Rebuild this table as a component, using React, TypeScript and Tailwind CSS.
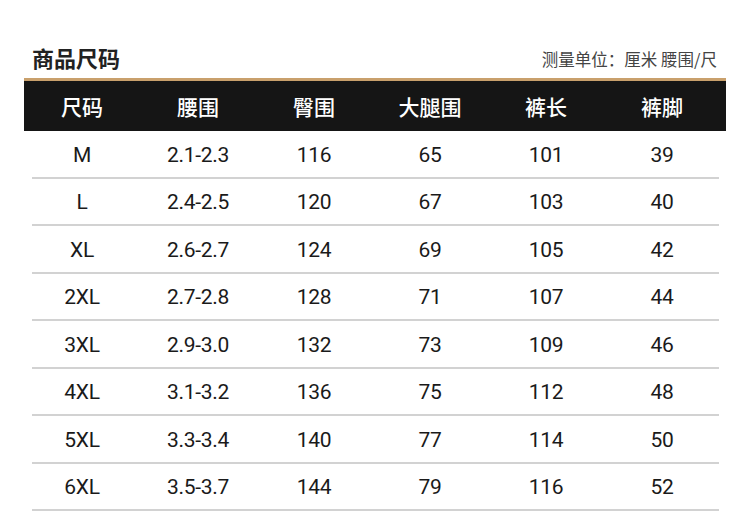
const headers = ['尺码', '腰围', '臀围', '大腿围', '裤长', '裤脚']

const rows = [
  ['M', '2.1-2.3', '116', '65', '101', '39'],
  ['L', '2.4-2.5', '120', '67', '103', '40'],
  ['XL', '2.6-2.7', '124', '69', '105', '42'],
  ['2XL', '2.7-2.8', '128', '71', '107', '44'],
  ['3XL', '2.9-3.0', '132', '73', '109', '46'],
  ['4XL', '3.1-3.2', '136', '75', '112', '48'],
  ['5XL', '3.3-3.4', '140', '77', '114', '50'],
  ['6XL', '3.5-3.7', '144', '79', '116', '52'],
]

const cjk = { fontFamily: '"Noto Sans CJK SC", "Noto Sans", sans-serif' }
const num = { fontFamily: 'Roboto, "Noto Sans", sans-serif' }

export default function App() {
  return (
    <div className="w-[750px] h-[531px] bg-white overflow-hidden">
      {/* title */}
      <div className="h-[78px] pt-[36px] pl-[32px] pr-[33px] flex items-center justify-between">
        <h1 className="text-[22px] leading-none font-bold text-[#222]" style={cjk}>
          商品尺码
        </h1>
        <span className="mt-[5px] text-[16.5px] leading-none text-[#444]" style={cjk}>
          测量单位：厘米 腰围/尺
        </span>
      </div>

      <div className="ml-[24px] mr-[24px]">
        {/* header bar */}
        <div className="h-[53px] border-t-[3px] border-[#c9a06c] bg-[#151515] grid grid-cols-[repeat(6,116px)] items-center">
          {headers.map((h) => (
            <div key={h} className="text-center text-white text-[21px] font-medium leading-none" style={cjk}>
              {h}
            </div>
          ))}
        </div>

        {rows.map((r) => (
          <div key={r[0]}>
            <div className="h-[45.5px] grid grid-cols-[repeat(6,116px)] items-center pt-[3px]">
              {r.map((c, i) => (
                <div key={i} className="text-center text-[21px] leading-none text-[#1a1a1a] tracking-[-0.3px]" style={num}>
                  {c}
                </div>
              ))}
            </div>
            <div className="ml-[8px] mr-[7px] h-[2px] bg-[#d2d2d2]" />
          </div>
        ))}
      </div>
    </div>
  )
}
